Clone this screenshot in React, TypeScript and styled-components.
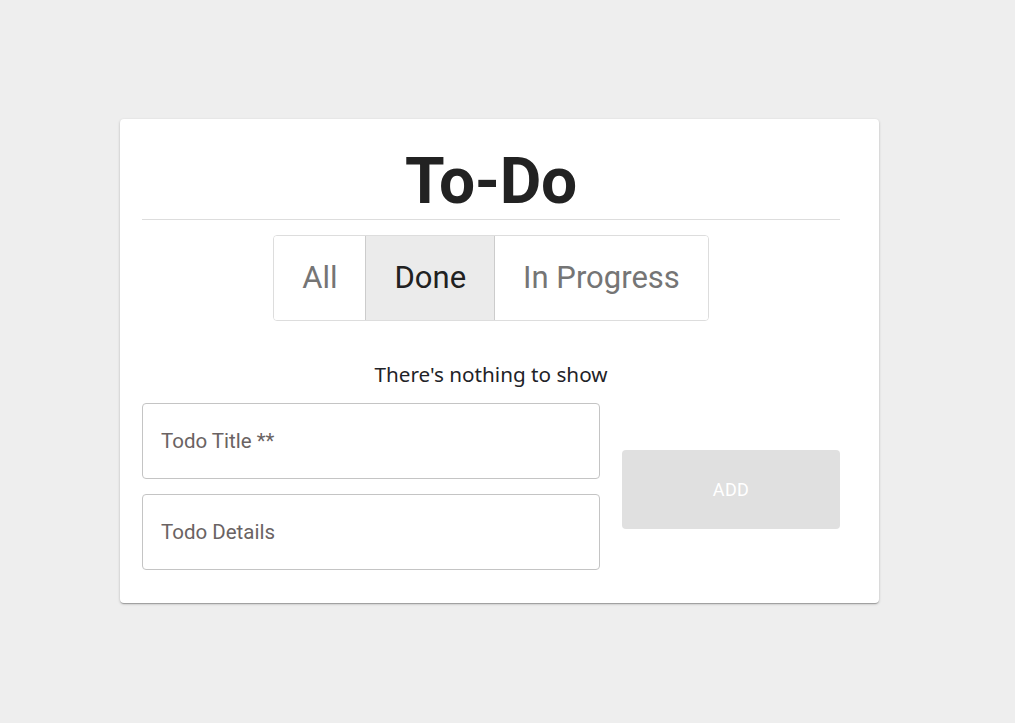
import React, { useState } from "react";
import styled, { createGlobalStyle } from "styled-components";

const GlobalStyle = createGlobalStyle`
  html, body { margin: 0; padding: 0; background: #eeeeee; }
  body { font-family: Roboto, "Noto Sans", sans-serif; }
  * { box-sizing: border-box; }
`;

const Page = styled.div`
  padding: 119px 0 0 120px;
  min-height: 723px;
`;

const Card = styled.section`
  width: 759px;
  background: #ffffff;
  border-radius: 4px;
  padding: 31px 39px 33px 22px;
  box-shadow: 0 1px 3px 0 rgba(0, 0, 0, 0.2), 0 1px 1px 0 rgba(0, 0, 0, 0.14),
    0 2px 1px -1px rgba(0, 0, 0, 0.12);
`;

const Title = styled.h1`
  margin: 0;
  font-family: Roboto, sans-serif;
  font-weight: 700;
  font-size: 64px;
  line-height: 64px;
  color: #222222;
  text-align: center;
  letter-spacing: -0.3px;
`;

const Divider = styled.hr`
  margin: 5px 0 15px;
  border: 0;
  height: 1px;
  background: #dddddd;
`;

const TabRow = styled.div`
  display: flex;
  justify-content: center;
`;

const Tabs = styled.div`
  display: inline-flex;
  border: 1px solid #dddddd;
  border-radius: 4px;
  overflow: hidden;
`;

const Tab = styled.button<{ $active?: boolean }>`
  appearance: none;
  margin: 0;
  height: 84px;
  padding: 0 28px;
  font-family: Roboto, sans-serif;
  font-size: 31px;
  line-height: 84px;
  color: ${(p) => (p.$active ? "#212121" : "#757575")};
  background: ${(p) => (p.$active ? "#ebebeb" : "#ffffff")};
  border: 0;
  border-left: ${(p) => (p.$active ? "1px solid #cccccc" : "0")};
  border-right: ${(p) => (p.$active ? "1px solid #cccccc" : "0")};
  cursor: pointer;
`;

const Empty = styled.p`
  margin: 39px 0 15px;
  font-family: "Noto Sans", sans-serif;
  font-size: 20.7px;
  line-height: 28px;
  color: #1f2328;
  text-align: center;
`;

const FormRow = styled.div`
  display: flex;
  align-items: center;
  gap: 22px;
`;

const Fields = styled.div`
  width: 458px;
  display: flex;
  flex-direction: column;
  gap: 15px;
`;

const Field = styled.input`
  width: 100%;
  height: 76px;
  border: 1px solid #c4c4c4;
  border-radius: 4px;
  padding: 0 18px;
  font-family: Roboto, sans-serif;
  font-size: 20.5px;
  color: #333333;
  background: #ffffff;
  outline: none;
  &::placeholder { color: #6a6363; }
`;

const AddButton = styled.button`
  width: 218px;
  height: 79px;
  margin-top: 6px;
  border: 0;
  border-radius: 4px;
  background: #e0e0e0;
  color: #ffffff;
  font-family: Roboto, sans-serif;
  font-weight: 400;
  font-size: 18px;
  letter-spacing: 0.3px;
  text-transform: uppercase;
`;

const filters = ["All", "Done", "In Progress"];

export default function App() {
  const [active, setActive] = useState("Done");
  return (
    <>
      <GlobalStyle />
      <Page>
        <Card>
          <Title>To-Do</Title>
          <Divider />
          <TabRow>
            <Tabs>
              {filters.map((f) => (
                <Tab key={f} $active={f === active} onClick={() => setActive(f)}>
                  {f}
                </Tab>
              ))}
            </Tabs>
          </TabRow>
          <Empty>There's nothing to show</Empty>
          <FormRow>
            <Fields>
              <Field placeholder="Todo Title **" />
              <Field placeholder="Todo Details" />
            </Fields>
            <AddButton disabled>Add</AddButton>
          </FormRow>
        </Card>
      </Page>
    </>
  );
}
